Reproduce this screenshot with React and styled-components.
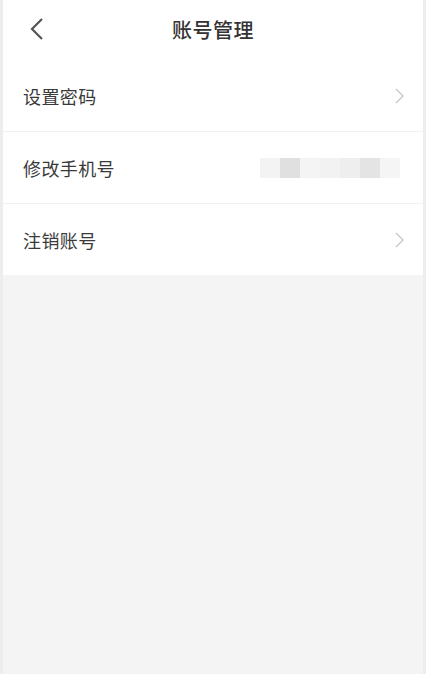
import React from "react";
import styled, { createGlobalStyle } from "styled-components";

const Global = createGlobalStyle`
  html, body { margin: 0; padding: 0; background: #ededed; }
  body { font-family: "Noto Sans CJK SC", "Noto Sans", sans-serif; }
`;

const Page = styled.div`
  margin: 0 3px;
  min-height: 674px;
  background: #f4f4f4;
  display: flex;
  flex-direction: column;
`;

const Header = styled.div`
  height: 60px;
  background: #fff;
  display: flex;
  align-items: center;
  justify-content: center;
  position: relative;
`;

const Back = styled.div`
  position: absolute;
  left: 22px;
  top: 16px;
  width: 24px;
  height: 26px;
  display: flex;
  align-items: center;
  justify-content: center;
`;

const Title = styled.div`
  font-size: 20px;
  font-weight: 500;
  color: #333;
  letter-spacing: 0.5px;
  margin-top: -2px;
`;

const List = styled.div`
  background: #fff;
  display: flex;
  flex-direction: column;
`;

const Row = styled.div`
  height: 71px;
  display: flex;
  align-items: center;
  justify-content: space-between;
  padding: 0 19px 0 20px;
  border-top: ${(p) => (p.$first ? "none" : "1px solid #f1f1f1")};
  box-sizing: content-box;
`;

const Label = styled.div`
  font-size: 18px;
  color: #3a3a3a;
  letter-spacing: 0.4px;
`;

const Masked = styled.div`
  display: flex;
  height: 20px;
  margin-right: 4px;
`;

const Block = styled.div`
  width: 20px;
  height: 20px;
  background: ${(p) => p.$c};
`;

const Chevron = () => (
  <svg width="12" height="18" viewBox="0 0 12 18">
    <path d="M4 2 L11 9 L4 16" fill="none" stroke="#c8c8c8" strokeWidth="1.4" />
  </svg>
);

const blocks = ["#f3f3f3", "#e0e0e0", "#f4f4f4", "#f2f2f2", "#eeeeee", "#e4e4e4", "#f5f5f5"];

export default function App() {
  return (
    <>
      <Global />
      <Page>
        <Header>
          <Back>
            <svg width="16" height="24" viewBox="0 0 16 24">
              <path d="M13 2 L3 12 L13 22" fill="none" stroke="#555" strokeWidth="2.2" />
            </svg>
          </Back>
          <Title>账号管理</Title>
        </Header>
        <List>
          <Row $first>
            <Label>设置密码</Label>
            <Chevron />
          </Row>
          <Row>
            <Label>修改手机号</Label>
            <Masked>
              {blocks.map((c, i) => (
                <Block key={i} $c={c} />
              ))}
            </Masked>
          </Row>
          <Row>
            <Label>注销账号</Label>
            <Chevron />
          </Row>
        </List>
      </Page>
    </>
  );
}
